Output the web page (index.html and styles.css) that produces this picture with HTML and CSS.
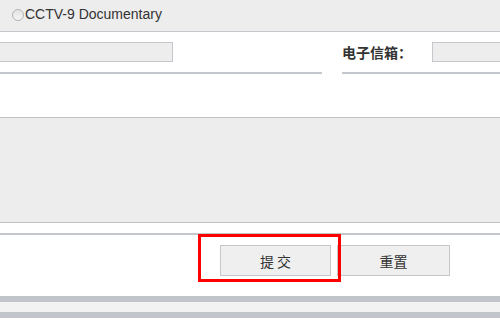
FILE: index.html
```html
<!DOCTYPE html>
<html lang="zh">
<head>
<meta charset="utf-8">
<title>Form</title>
<link rel="stylesheet" href="styles.css">
</head>
<body>
<div class="page">
  <div class="choice-bar">
    <span class="radio"></span>
    <span class="choice-label">CCTV-9 Documentary</span>
  </div>

  <div class="fields">
    <div class="field field-name">
      <span class="input input-a"></span>
    </div>
    <div class="field field-mail">
      <span class="label">电子信箱：</span>
      <span class="input input-b"></span>
    </div>
  </div>

  <div class="textarea"></div>

  <div class="actions">
    <button class="btn btn-submit" type="button">提 交</button>
    <button class="btn btn-reset" type="button">重置</button>
    <span class="highlight"></span>
  </div>

  <div class="footer-bars">
    <div class="bar bar-dark"></div>
    <div class="bar bar-light"></div>
    <div class="bar bar-dark"></div>
  </div>
</div>
</body>
</html>
```

FILE: styles.css
```css
* { box-sizing: border-box; }
html, body {
  margin: 0;
  padding: 0;
  background: #fff;
}
body {
  width: 500px;
  height: 330px;
  overflow: hidden;
  font-family: "Liberation Sans", Arial, "Noto Sans CJK SC", sans-serif;
  color: #333;
}
.page { width: 500px; overflow: hidden; }

.choice-bar {
  height: 32px;
  background: #ededed;
  border-bottom: 1px solid #c4c7cc;
  display: flex;
  align-items: center;
  padding-left: 12px;
  padding-bottom: 3px;
}
.radio {
  flex: none;
  width: 12px;
  height: 12px;
  border-radius: 50%;
  border: 1px solid #b4b4b4;
  background: linear-gradient(#e2e2e2, #f6f6f6);
  margin-right: 1px;
  margin-top: 1px;
}
.choice-label {
  font-size: 14px;
  color: #333;
}

.fields {
  display: flex;
  gap: 20px;
  height: 42px;
}
.field {
  flex: none;
  height: 42px;
  border-bottom: 2px solid #c4c7cc;
  padding-top: 10px;
  display: flex;
  align-items: flex-start;
}
.field-name { width: 322px; }
.field-mail { width: 200px; }
.input {
  flex: none;
  display: block;
  height: 20px;
  background: #ededed;
  border: 1px solid #c4c7cc;
}
.input-a {
  width: 182px;
  margin-left: -9px;
}
.input-b {
  width: 90px;
}
.label {
  flex: none;
  width: 90px;
  font-family: "Noto Sans CJK SC", sans-serif;
  font-weight: bold;
  font-size: 14px;
  line-height: 20px;
  color: #333;
}

.textarea {
  margin-top: 43px;
  height: 106px;
  background: #ededed;
  border-top: 1px solid #c2c2c2;
  border-bottom: 1px solid #c2c2c2;
}

.actions {
  position: relative;
  margin-top: 10px;
  border-top: 2px solid #c4c7cc;
  padding: 10px 0 20px 220px;
  display: flex;
  gap: 6px;
}
.btn {
  flex: none;
  width: 111px;
  height: 31px;
  background: #efefef;
  border: 1px solid #c4c7cc;
  font-family: "Noto Sans CJK SC", sans-serif;
  font-size: 14px;
  color: #333;
  padding: 0;
  margin: 0;
}
.btn-reset { width: 113px; }
.highlight {
  position: absolute;
  left: 198px;
  top: -1px;
  width: 143px;
  height: 48px;
  border: 3px solid #ff0000;
}

.bar { height: 6px; }
.bar-dark { background: #c1c5ca; }
.bar-light { height: 10px; background: #f2f2f2; }
```
